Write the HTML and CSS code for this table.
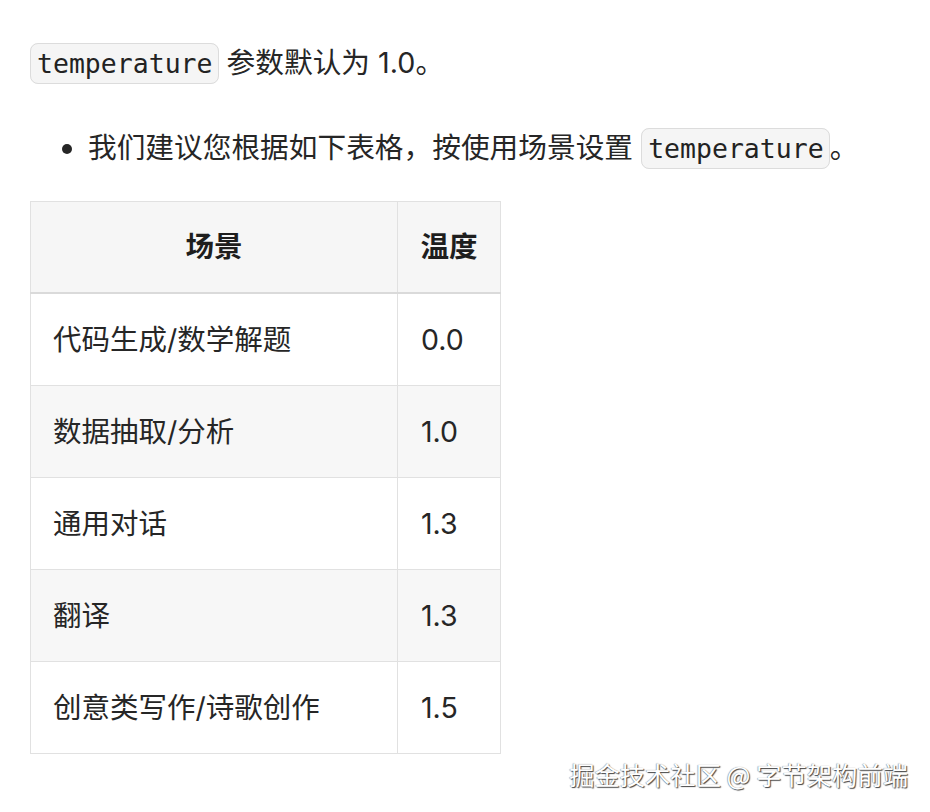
FILE: index.html
```html
<!DOCTYPE html>
<html lang="zh-CN">
<head>
<meta charset="utf-8">
<link rel="stylesheet" href="styles.css">
</head>
<body>
<div class="page">
  <p class="para"><code class="code">temperature</code> 参数默认为 1.0。</p>
  <ul class="list">
    <li>我们建议您根据如下表格，按使用场景设置 <code class="code">temperature</code>。</li>
  </ul>
  <table class="tbl">
    <colgroup><col class="c1"><col class="c2"></colgroup>
    <thead>
      <tr><th>场景</th><th>温度</th></tr>
    </thead>
    <tbody>
      <tr><td>代码生成/数学解题</td><td>0.0</td></tr>
      <tr><td>数据抽取/分析</td><td>1.0</td></tr>
      <tr><td>通用对话</td><td>1.3</td></tr>
      <tr><td>翻译</td><td>1.3</td></tr>
      <tr><td>创意类写作/诗歌创作</td><td>1.5</td></tr>
    </tbody>
  </table>
  <div class="watermark">掘金技术社区 @ 字节架构前端</div>
</div>
</body>
</html>
```

FILE: styles.css
```css
html, body {
  margin: 0;
  padding: 0;
  background: #ffffff;
}
.page {
  position: relative;
  width: 930px;
  height: 812px;
  padding: 0 30px;
  box-sizing: border-box;
  font-family: Inter, "Noto Sans CJK SC", sans-serif;
  font-size: 28.7px;
  color: #262626;
  overflow: hidden;
}
.para {
  margin: 43px 0 0 0;
  line-height: 40px;
}
.code {
  font-family: "DejaVu Sans Mono", monospace;
  font-size: 26.5px;
  background: #f5f5f5;
  border: 1px solid #dcdcdc;
  border-radius: 8px;
  padding: 4px 5px 4px 6px;
  color: #222;
}
.list {
  margin: 43px 0 0 0;
  padding-left: 58px;
  line-height: 40px;
}
.list li::marker {
  font-size: 30px;
}
.tbl {
  margin-top: 32px;
  border-collapse: collapse;
  table-layout: fixed;
  width: 470px;
}
.c1 { width: 367px; }
.c2 { width: 103px; }
.tbl th, .tbl td {
  border: 1px solid #e1e1e1;
  padding: 27px 22px;
  line-height: 37px;
  font-size: 28.5px;
}
.tbl th {
  background: #f6f6f6;
  font-weight: 700;
  text-align: center;
  border-bottom: 2px solid #dadada;
  color: #1e1e1e;
  padding-top: 26px;
}
.tbl td {
  text-align: left;
}
.tbl td:nth-child(2) {
  padding-left: 23px;
}
.tbl tbody tr:nth-child(even) td {
  background: #f7f7f7;
}
.watermark {
  position: absolute;
  right: 22px;
  top: 757px;
  font-family: "Noto Sans CJK SC", sans-serif;
  font-size: 25.3px;
  line-height: 34px;
  color: #ffffff;
  text-shadow: 1px 1px 1px #444, -0.5px -0.5px 1px #888;
}
```
